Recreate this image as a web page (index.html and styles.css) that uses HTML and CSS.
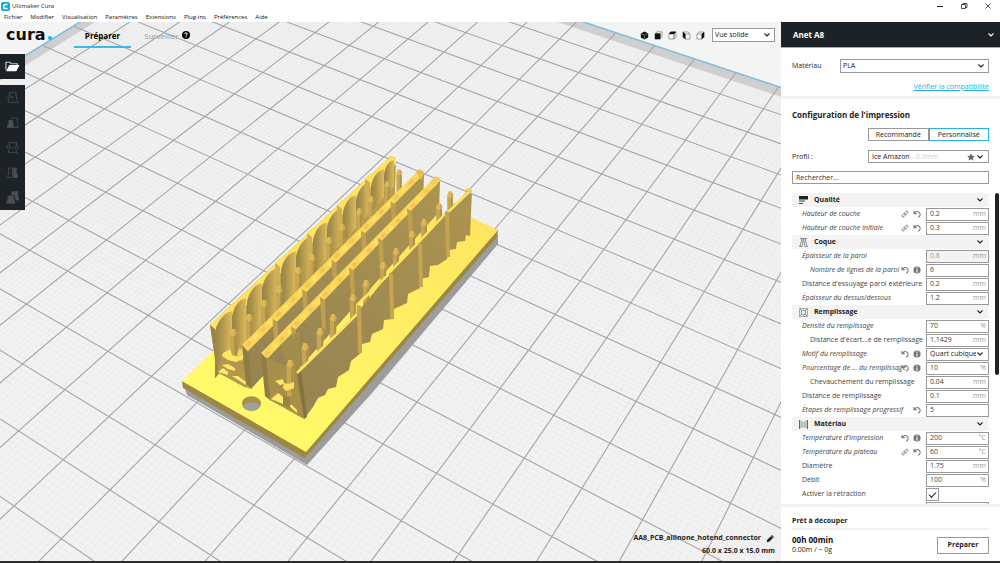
FILE: index.html
```html
<!DOCTYPE html>
<html lang="fr">
  <head>
    <meta charset="utf-8">
    <title>Ultimaker Cura</title>
    <link rel="stylesheet" href="styles.css">
  </head>
<body>
  <svg class="defs" width="0" height="0">
    <symbol id="i-down" viewBox="0 0 8 6"><path d="M1.5 1.5 4 4 6.5 1.5" fill="none" stroke="currentColor" stroke-width="1.1"/></symbol>
    <symbol id="i-undo" viewBox="0 0 8 8"><path d="M1 1v2.6h2.6M1.3 3.4C2.4 1.6 4.4 1 6 2.200c1.900 1.600 1.200 4.300-.9 5" fill="none" stroke="currentColor" stroke-width="1.1"/></symbol>
    <symbol id="i-link" viewBox="0 0 8 8"><g fill="none" stroke="currentColor" stroke-width=".9"><rect x="-1.800" y="-1.100" width="3.600" height="2.200" rx="1.100" transform="translate(2.600 5.400) rotate(-45)"/><rect x="-1.800" y="-1.100" width="3.600" height="2.200" rx="1.100" transform="translate(5.200 2.800) rotate(-45)"/></g></symbol>
    <symbol id="i-info" viewBox="0 0 8 8"><circle cx="4" cy="4" r="3.600" fill="currentColor"/><path d="M4 1.500v1.200M4 3.500v3" stroke="#fff" stroke-width="1.100"/></symbol>
  </svg>

  <header class="titlebar">
    <svg class="app-icon" viewBox="0 0 9 9"><rect width="9" height="9" rx="2" fill="#12a8e0"/><path d="M6.500 2.400H4.200Q2.600 2.400 2.600 4.500t1.600 2.100h2.300" fill="none" stroke="#fff" stroke-width="1.500"/></svg>
    <span class="title">Ultimaker Cura</span>
    <button class="win" aria-label="Réduire"><svg viewBox="0 0 8 8"><path d="M1 4.500h6" stroke="#222"/></svg></button>
    <button class="win" aria-label="Restaurer"><svg viewBox="0 0 8 8"><path d="M1.500 2.500h4v4h-4zM3 2.500v-1h4v4H5.500" fill="none" stroke="#222" stroke-width=".8"/></svg></button>
    <button class="win" aria-label="Fermer"><svg viewBox="0 0 8 8"><path d="M1.500 1.500l5 5M6.500 1.500l-5 5" stroke="#222" stroke-width=".8"/></svg></button>
  </header>
  <nav class="menubar">
    <a href="#">Fichier</a>
    <a href="#">Modifier</a>
    <a href="#">Visualisation</a>
    <a href="#">Paramètres</a>
    <a href="#">Extensions</a>
    <a href="#">Plug-ins</a>
    <a href="#">Préférences</a>
    <a href="#">Aide</a>
  </nav>

  <main class="window-body">
    <div class="viewport">
      <svg id="scene" class="scene" viewBox="0 22 781 539" preserveAspectRatio="xMinYMin slice"></svg>

      <div class="topbar">
        <div class="logo">cura<i></i></div>
        <a class="stage active" href="#">Préparer</a>
        <a class="stage" href="#">Surveiller</a>
        <svg class="help" viewBox="0 0 8 8"><circle cx="4" cy="4" r="4" fill="#000"/><path d="M2.700 3.100Q2.800 1.800 4 1.800t1.300 1.100Q5.300 3.600 4 4.200v.7M4 5.500v1" fill="none" stroke="#fff" stroke-width="1"/></svg>
        <div class="views">
          <button aria-label="Vue 3D"><svg viewBox="0 0 9 9"><path d="M4.500.5 8.200 2.400v4.200L4.500 8.600.8 6.600V2.400z" fill="#111"/><path d="M1 2.600 4.500 4.400 8 2.600M4.500 4.400v4" fill="none" stroke="#999" stroke-width=".6"/></svg></button>
          <button aria-label="Vue de face"><svg viewBox="0 0 9 9"><path d="M1.500 2.500 3 .8h5v5L6.500 7.500V2.500z" fill="#fff" stroke="#777" stroke-width=".7"/><path d="M.8 2.500h5.500v5.800H.8z" fill="#111"/></svg></button>
          <button aria-label="Vue de dessus"><svg viewBox="0 0 9 9"><path d="M1 3h5v5H1zM6 8l2-2V1L6 3z" fill="#fff" stroke="#777" stroke-width=".7"/><path d="M.7 3 2.800.6h5.600L6.300 3z" fill="#111"/></svg></button>
          <button aria-label="Vue de gauche"><svg viewBox="0 0 9 9"><path d="M3.200 3H8v5H3.200zM3 3 1 1h5l2 2" fill="#fff" stroke="#777" stroke-width=".7"/><path d="M.7.700 3.400 3v5.500L.7 6z" fill="#111"/></svg></button>
          <button aria-label="Vue de droite"><svg viewBox="0 0 9 9"><path d="M1 3h4.800v5H1zM1 3l2-2h5L6 3" fill="#fff" stroke="#777" stroke-width=".7"/><path d="M5.700 3 8.300.700V6L5.700 8.500z" fill="#111"/></svg></button>
        </div>
        <div class="pick view-mode"><select aria-label="Vue"><option>Vue solide</option></select><svg class="down"><use href="#i-down"/></svg></div>
      </div>

      <div class="tools">
        <button class="open" aria-label="Ouvrir"><svg viewBox="0 0 16 16"><path d="M1 11.500V3.500h4.500l1 1.500H13v2" fill="none" stroke="#ccc" stroke-width="1.200"/><path d="M4.500 6.500h11L12 13H1.200z" fill="#fff"/></svg></button>
        <div class="tool-group">
          <button aria-label="Déplacer"><svg viewBox="0 0 16 16"><path d="M4 2h9l-.8 2.500L14.500 14h-12l1.500-5.500M4 2l.5 4" /><path d="M1 7.500h7M6.500 6l2 1.500-2 1.500"/></svg></button>
          <button aria-label="Mettre à l'échelle"><svg viewBox="0 0 16 16"><path d="M5.500 2.500h9L13.500 5l1.500 9H9.500"/><path class="f" d="M3.500 5.500h5L8 7.500 9.500 14H1.500L3.800 7.500z"/></svg></button>
          <button aria-label="Pivoter"><svg viewBox="0 0 16 16"><path d="M4 5V2h9v3M12 11l1.500 3h-11L4 11M6.500 8.500h3"/><circle cx="3" cy="7.500" r="2"/><circle cx="13" cy="7.500" r="2"/></svg></button>
          <button aria-label="Miroir"><svg viewBox="0 0 16 16"><path d="M6.500 2.500H3l.8 3L2 14h4.500M8 1v14"/><path class="f" d="M9.500 2.500H13l-.8 3L14.500 14h-5z"/></svg></button>
          <button aria-label="Paramètres par modèle"><svg viewBox="0 0 16 16"><path class="f" d="M7 1h8l-.8 3 1.500 7h-3.500L11 4.500H7z"/><path class="f" d="M2.500 6h7L9 8.500l2 6.500H.5L3 8.500z"/></svg></button>
        </div>
      </div>

      <div class="job">
        <div class="job-name">AA8_PCB_allinone_hotend_connector
          <svg viewBox="0 0 9 9"><path d="M.7 8.300 1.200 5.800 6 1 8 3 3.200 7.800z" fill="#222"/><path d="M5 1.800 7.200 4" stroke="#eee" stroke-width=".6"/></svg>
        </div>
        <div class="job-size">60.0 x 25.0 x 15.0 mm</div>
      </div>
    </div>

    <aside class="sidebar">
      <button class="machine">Anet A8<svg class="down"><use href="#i-down"/></svg></button>

      <section class="material">
        <div class="field">
          <label for="material">Matériau</label>
          <div class="pick"><select id="material"><option>PLA</option></select><svg class="down"><use href="#i-down"/></svg></div>
        </div>
        <a class="check" href="#">Vérifier la compatibilité</a>
      </section>

      <section class="config">
        <h1>Configuration de l'impression</h1>
        <div class="modes">
          <button>Recommandé</button><button class="active">Personnalisé</button>
        </div>
        <div class="field profile">
          <label for="profile">Profil :</label>
          <button id="profile" class="profile-btn">Ice Amazon <em>- 0.3mm</em><svg class="star" viewBox="0 0 8 8"><path d="M4 .3l1.100 2.500 2.700.3-2 1.800.6 2.700L4 6.200 1.600 7.600l.6-2.700-2-1.800 2.700-.3z" fill="#666"/></svg><svg class="down"><use href="#i-down"/></svg></button>
        </div>
        <input class="search" type="text" placeholder="Rechercher..." aria-label="Rechercher">

        <div class="list">
          <div class="settings">
            <button class="cat"><svg class="cat-icon" viewBox="0 0 9 9"><path d="M0 0h9v3.500H0z" fill="#222"/><path d="M0 5h6M0 7.500h4" stroke="#444" stroke-width="1.200"/></svg>Qualité<svg class="down"><use href="#i-down"/></svg></button>
            <div class="row mod"><label for="s1">Hauteur de couche</label><svg><use href="#i-link"/></svg><svg><use href="#i-undo"/></svg><span class="val"><input id="s1" value="0.2"><i>mm</i></span></div>
            <div class="row mod"><label for="s2">Hauteur de couche initiale</label><svg><use href="#i-link"/></svg><svg><use href="#i-undo"/></svg><span class="val"><input id="s2" value="0.3"><i>mm</i></span></div>

            <button class="cat"><svg class="cat-icon" viewBox="0 0 9 9"><path d="M1 .5h7M2.500.5v2.500L.8 8.500M6.500.5v2.500l1.700 5.500M4 .5v3L3 8.500M5 .5v3l1 5M.3 8.500h3M5.700 8.500h3" fill="none" stroke="#777" stroke-width=".8"/></svg>Coque<svg class="down"><use href="#i-down"/></svg></button>
            <div class="row mod"><label for="s3">Épaisseur de la paroi</label><span class="val off"><input id="s3" value="0.8" disabled><i>mm</i></span></div>
            <div class="row mod sub"><label for="s4">Nombre de lignes de la paroi</label><svg><use href="#i-undo"/></svg><svg><use href="#i-info"/></svg><span class="val"><input id="s4" value="6"></span></div>
            <div class="row"><label for="s5">Distance d'essuyage paroi extérieure</label><span class="val"><input id="s5" value="0.2"><i>mm</i></span></div>
            <div class="row mod"><label for="s6">Épaisseur du dessus/dessous</label><span class="val"><input id="s6" value="1.2"><i>mm</i></span></div>

            <button class="cat"><svg class="cat-icon" viewBox="0 0 9 9"><g fill="none" stroke="#777" stroke-width=".8"><path d="M.5.500h8v8h-8z" stroke-dasharray="2 .6"/><circle cx="4.500" cy="4.500" r="2.300"/><path d="M1 1l2 2M8 1 6 3M1 8l2-2M8 8 6 6"/></g></svg>Remplissage<svg class="down"><use href="#i-down"/></svg></button>
            <div class="row mod"><label for="s7">Densité du remplissage</label><span class="val"><input id="s7" value="70"><i>%</i></span></div>
            <div class="row sub"><label for="s8">Distance d'écart...e de remplissage</label><span class="val"><input id="s8" value="1.1429"><i>mm</i></span></div>
            <div class="row mod"><label for="s9">Motif du remplissage</label><svg><use href="#i-undo"/></svg><svg><use href="#i-info"/></svg><span class="val pick"><select id="s9"><option>Quart cubique</option></select><svg class="down"><use href="#i-down"/></svg></span></div>
            <div class="row mod"><label for="s10">Pourcentage de ... du remplissage</label><svg><use href="#i-undo"/></svg><svg><use href="#i-info"/></svg><span class="val"><input id="s10" value="10"><i>%</i></span></div>
            <div class="row sub"><label for="s11">Chevauchement du remplissage</label><span class="val"><input id="s11" value="0.04"><i>mm</i></span></div>
            <div class="row"><label for="s12">Distance de remplissage</label><span class="val"><input id="s12" value="0.1"><i>mm</i></span></div>
            <div class="row mod"><label for="s13">Étapes de remplissage progressif</label><svg><use href="#i-undo"/></svg><span class="val"><input id="s13" value="5"></span></div>

            <button class="cat"><svg class="cat-icon" viewBox="0 0 9 9"><path d="M.6 0v9M8.400 0v9" stroke="#666" stroke-width="1.200"/><path d="M2.300 1v7M6.700 1v7M3.800 1.500v6M5.200 1.500v6" stroke="#888" stroke-width=".7"/></svg>Matériau<svg class="down"><use href="#i-down"/></svg></button>
            <div class="row mod"><label for="s14">Température d'impression</label><svg><use href="#i-undo"/></svg><svg><use href="#i-info"/></svg><span class="val"><input id="s14" value="200"><i>°C</i></span></div>
            <div class="row mod"><label for="s15">Température du plateau</label><svg><use href="#i-link"/></svg><svg><use href="#i-undo"/></svg><span class="val"><input id="s15" value="60"><i>°C</i></span></div>
            <div class="row"><label for="s16">Diamètre</label><span class="val"><input id="s16" value="1.75"><i>mm</i></span></div>
            <div class="row"><label for="s17">Débit</label><span class="val"><input id="s17" value="100"><i>%</i></span></div>
            <div class="row"><label for="s18">Activer la rétraction</label><span class="tick"><input id="s18" type="checkbox" checked></span></div>
            <div class="row"><label></label><span class="val"></span></div>
          </div>
          <div class="scroll"></div>
        </div>
      </section>

      <section class="output">
        <h2>Prêt à découper</h2>
        <div class="progress"></div>
        <div class="result">
          <div><strong>00h 00min</strong><span>0.00m / ~ 0g</span></div>
          <button>Préparer</button>
        </div>
      </section>
    </aside>
  </main>
  <script src="scene.js"></script>
</body>
</html>
```

FILE: styles.css
```css
* {
    box-sizing: border-box;
}
body {
    margin: 0;
    height: 100vh;
    display: flex;
    flex-direction: column;
    overflow: hidden;
    font: 7px/10px "Open Sans", "Noto Sans", sans-serif;
    color: #222;
    background: #fff;
    border-bottom: 2px solid #2b2b2b;
}
button, input, select {
    font: inherit;
    color: inherit;
    margin: 0;
    padding: 0;
    border: 0;
    border-radius: 0;
    background: none;
    outline: none;
    appearance: none;
}
a {
    color: inherit;
    text-decoration: none;
}
svg {
    display: block;
    flex: none;
}
.defs {
    position: absolute;
}
.down {
    width: 8px;
    height: 6px;
}

/* window caption and menu */
.titlebar {
    height: 12px;
    display: flex;
    align-items: center;
    padding: 0 8px 0 1px;
    font-size: 6px;
}
.app-icon {
    width: 9px;
    height: 9px;
}
.title {
    flex: 1;
    padding-left: 2px;
}
.win {
    width: 8px;
    margin-left: 16px;
}
.win svg {
    width: 8px;
    height: 8px;
}
.menubar {
    height: 10px;
    display: flex;
    gap: 8px;
    padding-left: 4px;
    font-size: 6px;
    color: #111;
}

.window-body {
    flex: 1;
    min-height: 0;
    display: flex;
}

/* 3D view */
.viewport {
    flex: 1;
    min-width: 0;
    position: relative;
    background: #f4f4f4;
    overflow: hidden;
}
.scene {
    position: absolute;
    width: 100%;
    height: 100%;
}
.topbar {
    position: relative;
    height: 26px;
    display: flex;
    align-items: center;
    padding: 0 6px;
}
.logo {
    width: 68px;
    font: bold 16px/20px "DejaVu Sans", sans-serif;
    color: #111;
}
.logo i {
    display: inline-block;
    width: 4px;
    height: 4px;
    margin-left: 2px;
    border-radius: 2px;
    background: #1fb0ea;
}
.stage {
    height: 25px;
    line-height: 25px;
    font-size: 8px;
    color: #999;
    border-bottom: 2px solid transparent;
}
.stage.active {
    width: 57px;
    margin-right: 13px;
    text-align: center;
    font-weight: bold;
    color: #000;
    border-color: #3fb8f0;
}
.help {
    width: 8px;
    height: 8px;
    margin-left: 3px;
}
.views {
    margin-left: auto;
    display: flex;
    gap: 5px;
    padding-right: 7px;
}
.views svg {
    width: 9px;
    height: 9px;
}
.pick {
    display: flex;
    align-items: center;
    height: 14px;
    border: 1px solid #999;
    background: #fff;
    padding-right: 3px;
}
.pick select {
    flex: 1;
    min-width: 0;
    padding-left: 2px;
}
.view-mode {
    width: 63px;
}

.tools {
    position: relative;
    width: 25px;
    margin-top: 6px;
    display: flex;
    flex-direction: column;
    gap: 6px;
}
.tools button {
    display: grid;
    place-items: center;
    width: 25px;
    height: 25px;
}
.tools svg {
    width: 15px;
    height: 15px;
}
.open, .tool-group {
    background: #1c2225;
}
.tool-group svg {
    width: 13px;
    height: 13px;
    fill: none;
    stroke: #4b5053;
}
.tool-group .f {
    fill: #4b5053;
}

.job {
    position: absolute;
    right: 6px;
    bottom: 5px;
    display: flex;
    flex-direction: column;
    align-items: flex-end;
    gap: 3px;
    font-weight: bold;
}
.job-name {
    display: flex;
    align-items: center;
    gap: 5px;
}
.job-name svg {
    width: 9px;
    height: 9px;
}

/* sidebar */
.sidebar {
    width: 219px;
    flex: none;
    display: flex;
    flex-direction: column;
}
.machine {
    height: 26px;
    display: flex;
    align-items: center;
    justify-content: space-between;
    padding: 0 5px 0 12px;
    background: #1c2225;
    border-bottom: 1px solid #aaa;
    color: #fff;
    font-size: 8px;
    font-weight: bold;
}
.material {
    padding: 11px 11px 4px;
    border-bottom: 3px solid #f2f2f2;
    text-align: right;
}
.field {
    display: flex;
    align-items: center;
    justify-content: space-between;
    text-align: left;
}
.material .pick {
    width: 149px;
}
.check {
    display: block;
    margin-top: 9px;
    color: #28b0e8;
    text-decoration: underline;
}
.config {
    flex: 1;
    min-height: 0;
    display: flex;
    flex-direction: column;
    padding: 11px 1px 0 11px;
}
h1 {
    margin: 0 0 8px;
    font-size: 8px;
    line-height: 10px;
}
.modes {
    display: flex;
    align-self: flex-end;
    width: 121px;
    margin-right: 10px;
}
.modes button {
    flex: 1;
    height: 13px;
    border: 1px solid #999;
}
.modes .active {
    border-color: #28b0e8;
}
.profile {
    margin: 9px 10px 8px 0;
}
.profile-btn {
    width: 121px;
    height: 13px;
    display: flex;
    align-items: center;
    border: 1px solid #999;
    padding: 0 4px 0 3px;
}
.profile-btn em {
    flex: 1;
    margin-left: 2px;
    font-style: normal;
    text-align: left;
    color: #ccc;
}
.star {
    width: 8px;
    height: 8px;
    margin-right: 1px;
}
.search {
    height: 13px;
    margin: 0 10px 9px 0;
    border: 1px solid #999;
    padding-left: 3px;
}
.search::placeholder {
    color: #333;
}
.list {
    flex: 1;
    min-height: 0;
    display: flex;
    gap: 6px;
    overflow: hidden;
}
.settings {
    flex: 1;
    min-width: 0;
}
.scroll {
    flex: none;
    width: 4px;
    height: 182px;
    border-radius: 2px;
    background: #1c2225;
}
.cat {
    width: 100%;
    height: 14px;
    display: flex;
    align-items: center;
    padding: 0 5px 0 7px;
    background: #f3f3f3;
    font-weight: bold;
}
.cat .down {
    margin-left: auto;
}
.cat-icon {
    width: 9px;
    height: 9px;
    margin-right: 6px;
}
.row {
    height: 14px;
    display: flex;
    align-items: center;
    padding-left: 10px;
    color: #444;
}
.row label {
    flex: 1;
    min-width: 0;
    white-space: nowrap;
}
.sub {
    padding-left: 18px;
}
.mod label {
    font-style: italic;
}
.row > svg {
    width: 8px;
    height: 8px;
    margin-right: 4px;
    color: #777;
}
.row > svg + .val {
    margin-left: 1px;
}
.val {
    flex: none;
    width: 63px;
    height: 13px;
    display: flex;
    align-items: center;
    border: 1px solid #999;
    padding: 0 2px 0 3px;
}
.val input {
    flex: 1;
    min-width: 0;
}
.val i {
    font-style: normal;
    color: #999;
}
.val.off {
    background: #f3f3f3;
    color: #999;
}
.val.pick {
    padding: 0 4px 0 1px;
    color: #222;
}
.tick {
    flex: none;
    width: 63px;
}
.tick input {
    width: 13px;
    height: 13px;
    border: 1px solid #999;
    display: grid;
    place-items: center;
}
.tick input:checked::after {
    content: "";
    width: 6px;
    height: 3px;
    border: solid #222;
    border-width: 0 0 1px 1px;
    transform: rotate(-45deg);
}

.output {
    border-top: 3px solid #f2f2f2;
    padding: 9px 11px 6px;
}
h2 {
    margin: 0;
    font-size: 7px;
    line-height: 10px;
}
.progress {
    height: 2px;
    margin: 2px 0 5px;
    background: #f0f0f0;
}
.result {
    display: flex;
    align-items: center;
    justify-content: space-between;
}
.result strong {
    display: block;
    font-size: 8px;
    color: #111;
}
.result button {
    width: 52px;
    height: 17px;
    border: 1px solid #999;
    font-weight: bold;
}
```

FILE: scene.js
```js
var scene = document.getElementById("scene");
var out = [];

// ground plane (1 unit = 10mm) to screen
function project(i, j) {
    var w = 1 - 0.01778 * i - 0.0275 * j;
    return [(210 + 33.29 * i - 37.46 * j) / w, (157 + 14.09 * i + 21.06 * j) / w];
}
function at(p) {
    return p[0].toFixed(1) + " " + p[1].toFixed(1);
}
function seg(i1, j1, i2, j2) {
    return "M" + at(project(i1, j1)) + "L" + at(project(i2, j2));
}
function quad(i1, j1, i2, j2, fill) {
    poly([project(i1, j1), project(i2, j1), project(i2, j2), project(i1, j2)], fill);
}
function poly(points, fill) {
    out.push('<polygon points="' + points.map(at).join(" ") + '" fill="' + fill + '"/>');
}
function path(d, attrs) {
    out.push('<path d="' + d + '" ' + attrs + '/>');
}
function mix(a, b, t) {
    return [a[0] + (b[0] - a[0]) * t, a[1] + (b[1] - a[1]) * t];
}

var I0 = -6, I1 = 16, J0 = -9, J1 = 13;

out.push('<defs>' +
    '<linearGradient id="curve"><stop offset="0" stop-color="#96834a"/><stop offset=".3" stop-color="#a8904c"/><stop offset="1" stop-color="#deba5b"/></linearGradient>' +
    '<linearGradient id="wall" x1="1" y1="0" x2="0" y2="1"><stop offset="0" stop-color="#ac9450"/><stop offset="1" stop-color="#958352"/></linearGradient>' +
    '<linearGradient id="plate" x1="1" y1="0" x2="0" y2="1"><stop offset="0" stop-color="#ffe45f"/><stop offset="1" stop-color="#ffff6c"/></linearGradient>' +
    '</defs>');

// bed
quad(I0, J0, I1, J1, "#f2f2f2");
var fine = "", bold = "", n;
for (n = I0 * 10; n <= I1 * 10; n++) {
    if (n % 10) fine += seg(n / 10, J0, n / 10, J1);
    else bold += seg(n / 10, J0, n / 10, J1);
}
for (n = J0 * 10; n <= J1 * 10; n++) {
    if (n % 10) fine += seg(I0, n / 10, I1, n / 10);
    else bold += seg(I0, n / 10, I1, n / 10);
}
path(fine, 'fill="none" stroke="#e7e7e7" stroke-width=".6"');
quad(I0, J0, I1, J0 + 0.35, "#cfcfcf");
quad(I0, J0, I0 + 0.3, J1, "#cfcfcf");
path(bold, 'fill="none" stroke="#a4a4a4" stroke-width="1.100"');
path(seg(I0, J0, I1, J0) + seg(I0, J0, I0, J1), 'fill="none" stroke="#7cc4e4" stroke-width="1.3"');

// board
poly([[185, 389], [187, 395], [307, 465], [372, 393], [498, 244], [498, 234], [305, 455]], "#9c9c9c");
poly([[182, 381], [183, 388], [305, 458], [497, 237], [498, 229], [306, 451]], "#9c8843");
poly([[182, 381], [306, 452], [498, 230], [470, 217], [400, 210], [213, 351]], "url(#plate)");
out.push('<ellipse cx="251.500" cy="403.500" rx="9.500" ry="7.300" fill="#a8924a"/>');
path("M243 407Q245 402 252 402.500T260 405.500Q257 411 250 410.700 245 410 243 407Z", 'fill="#a0a0a0"');

// rear wall with the round pockets
poly([[210, 325], [391, 156], [396, 158], [394, 225], [250, 389], [217, 372]], "#b89c50");
poly([[210, 325], [391, 156], [396, 158], [396, 164], [216, 334]], "#ffe25e");
poly([[210, 325], [215, 329], [222, 374], [217, 371]], "#9a8442");
var pockets = [215, 232, 247, 262, 281, 296, 313, 327, 343, 356, 371, 384, 396];
for (n = 0; n < 12; n++) {
    var x0 = pockets[n], w = Math.min(pockets[n + 1] - x0, 17) - (n % 2 ? 1 : 0);
    if (n == 11) w = 10;
    var y0 = 325 - (x0 - 210) * 0.934, y1 = 325 - (x0 + w - 210) * 0.934;
    path("M" + x0 + " " + (y0 + 58 - n * 2) + "V" + (y0 + 12) +
        "C" + (x0 + 1) + " " + (y0 + 4) + " " + (x0 + w * 0.5) + " " + (y1 + 7) + " " + (x0 + w) + " " + (y1 + 7) +
        "V" + (y1 + 55 - n * 2) + "Z", 'fill="url(#curve)"');
    // joints between blocks
    if (n % 2 == 0 && n > 2) {
        poly([[x0 - 6, y0 + 4], [x0 - 1, y0 + 8], [x0, y0 + 42], [x0 - 5, y0 + 36]], "#cfae56");
        poly([[x0 - 6, y0 + 4], [x0 - 1, y0 - 1], [x0 + 3, y0 + 1], [x0 - 1, y0 + 8]], "#ffe25e");
    }
}

function pin(x, y, s, h) {
    poly([[x - 3.2 * s, y + 4 * s], [x + 3.2 * s, y + 4 * s], [x + 3 * s, y + h], [x - 2.800 * s, y + h]], "#c6a653");
    poly([[x + 1 * s, y + 5 * s], [x + 3.2 * s, y + 4 * s], [x + 3 * s, y + h], [x + 1 * s, y + h]], "#ad9249");
    poly([[x - 1.500 * s, y - 2 * s], [x + 1.500 * s, y - 2 * s], [x + 3.800 * s, y + 2.500 * s], [x + 1 * s, y + 5.500 * s], [x - 3.600 * s, y + 3.500 * s]], "#dfb958");
    poly([[x + 1.500 * s, y - 2 * s], [x + 3.800 * s, y + 2.500 * s], [x + 1 * s, y + 5.500 * s]], "#c9a650");
}
var row1 = [[399, 171], [387, 183], [371, 198], [359, 210], [342, 226], [329, 239], [312, 256], [298, 269], [279, 288], [264, 302], [249, 316], [233, 331]];
var row2 = [[450, 193], [439, 205], [424, 221], [412, 233], [396, 250], [383, 264], [366, 282], [353, 296], [333, 316], [320, 330], [305, 345], [290, 362]];

// open end of the first connector
poly([[223, 353], [232, 348], [244, 352], [246, 388], [217, 372]], "#b39750");
row1.forEach(function (p, k) {
    pin(p[0], p[1], 0.85 + k * 0.015, 27);
    path("M" + (p[0] + 4) + " " + (p[1] + 24) + "l2-7 2 2 1-4 3 2-1 3 4-3v6l-7 7z", 'fill="#f3cf58"');
});
path("M223 353l7-4 2 6 8 2 3-3v5l-7 3-8-2-6-4z", 'fill="#ffe766"');
poly([[222, 365], [228, 364], [235, 368], [235, 371], [228, 369]], "#ffe766");
poly([[218, 372], [223, 368], [228, 372], [228, 375]], "#ffec68");
poly([[232, 376], [238, 376], [246, 382], [246, 385]], "#ffec68");

// inner walls: top edge from front (a) to back (b)
function wall(a, b, drop, rough) {
    poly([a, b, [b[0] - 1, b[1] + 32], [a[0] + 4, a[1] + drop]], "url(#wall)");
    poly([[a[0] - 5, a[1] - 4], [b[0] - 5, b[1] - 3], [b[0], b[1] - 2], [b[0], b[1] + 1], [a[0] + 1, a[1] + 2]], "#fbd65a");
    for (var k = 0; k < 6; k++) {
        var p = mix(a, b, k / 6), q = mix(a, b, (k + 1) / 6);
        for (var m = 0; m < 4; m++) {
            var c = mix(p, q, m / 4 + 0.08);
            path("M" + at([c[0] - 4, c[1] - 1]) + "l3-" + rough + " 3 1 0 2-3 3z", 'fill="' + (m % 2 ? "#ffe261" : "#f0c657") + '"');
        }
        if (k) poly([[p[0] - 4, p[1] - 1], [p[0] + 1, p[1] + 2], [p[0] + 2, p[1] + 32], [p[0] - 2, p[1] + 30]], "#bfa051");
    }
    poly([[a[0] - 5, a[1] - 4], [a[0] + 1, a[1] + 3], [a[0] + 5, a[1] + drop], [a[0] - 1, a[1] + drop - 5]], "#8f7c42");
}
wall([247, 349], [424, 173], 40, 5);
path("M424 173l-4-4-4 3 5 8z", 'fill="#e9bd55"');
wall([266, 357], [440, 180], 44, 3);
path("M440 180v-2l-4-2-6 6 4 4z", 'fill="#f3cc59"');

// open end of the second connector
poly([[266, 357], [298, 372], [304, 419], [270, 400]], "#a78f4b");
poly([[280, 345], [300, 330], [300, 372], [292, 374]], "#a38d4c");
row2.slice(0, 11).forEach(function (p, k) {
    pin(p[0], p[1], 0.9 + k * 0.015, 28);
    path("M" + (p[0] + 3) + " " + (p[1] + 22) + "l2-7 2 3 2-4 2 3 4-4v6l-8 9z", 'fill="#f8d55b"');
});
pin(290, 362, 1.05, 34);
poly([[275, 381], [283, 379], [284, 384], [280, 385]], "#ffe766");
path("M284 383l4 1 6-2v6l-8 3-3-3z", 'fill="#ffe161"');
poly([[271, 399], [278, 393], [283, 397], [283, 404]], "#ffec68");
poly([[288, 405], [292, 405], [297, 410], [297, 413]], "#ffec68");
poly([[283, 395], [290, 398], [290, 408], [283, 405]], "#97834a");

// front wall
poly([[297, 374], [340, 331], [357, 313], [389, 274], [418, 244], [445, 213], [454, 204], [462, 198], [466, 193], [472, 191],
    [470, 236], [466, 235], [465, 241], [457, 242], [456, 249], [449, 250], [447, 259], [438, 265], [430, 266], [429, 277], [420, 279],
    [420, 288], [408, 294], [407, 303], [394, 309], [393, 319], [384, 320], [383, 329], [372, 334], [370, 342], [362, 344], [362, 352],
    [351, 361], [349, 370], [338, 377], [336, 387], [328, 389], [325, 395], [318, 398], [313, 407], [304, 419]], "url(#wall)");
poly([[297, 374], [301, 371], [307, 417], [304, 419]], "#84733c");
path("M297 373 340 331 357 314M357 305 389 274M389 273 418 243M418 243 445 214M447 213 471 190", 'fill="none" stroke="#ffe462" stroke-width="2.500"');
path("M466 191v-3l6 2v4z", 'fill="#f3cc59"');
[[357, 305, 48], [389, 273, 46], [418, 243, 44], [445, 211, 46]].forEach(function (p) {
    poly([[p[0], p[1]], [p[0] + 4, p[1] + 1], [p[0] + 5, p[1] + p[2]], [p[0] + 1, p[1] + p[2]]], "#c5a552");
});

scene.innerHTML = out.join("");
```
